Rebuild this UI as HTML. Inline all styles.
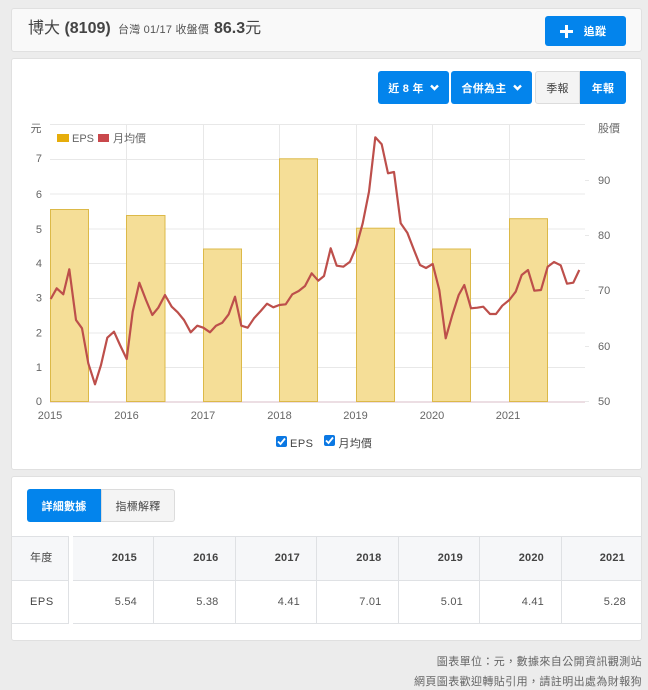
<!DOCTYPE html>
<html lang="zh-Hant">
<head>
<meta charset="utf-8">
<title>博大 (8109)</title>
<style>
html,body{margin:0;padding:0}
body{width:648px;height:688px;overflow:hidden;background:#ececec;position:relative;font-family:"Liberation Sans","Noto Sans CJK TC",sans-serif;color:#444}
.a{position:absolute;white-space:nowrap}
.card{position:absolute;left:11px;width:629px;background:#fff;border:1px solid #e0e0e0;border-radius:3px}
.btn{position:absolute;background:#0384ec;color:#fff;font-size:11px;display:flex;align-items:center;justify-content:center;letter-spacing:.25px;font-weight:bold;box-sizing:border-box}
.gray{background:#f4f4f4;color:#444;border:1px solid #dcdcdc;font-weight:normal}
.chev{width:9px;height:7px;margin-left:6px}
.th,.td{position:absolute;font-size:11px;letter-spacing:.2px;text-align:right;line-height:14px}
.th{font-weight:bold;top:551px;color:#444}
.td{top:595px;color:#555}
.hbg{position:absolute;top:537px;height:43px;background:#f6f7f9}
.l{position:absolute;background:#dfe1e4}
svg text{font-family:"Liberation Sans","Noto Sans CJK TC",sans-serif}
</style>
</head>
<body>
<div class="card" style="top:8px;height:42px;background:#f9f9f9"></div>
<div class="a" style="left:28px;top:19px;font-size:16px;line-height:20px;color:#444">博大 <b>(8109)</b></div>
<div class="a" style="left:118px;top:22px;font-size:11px;line-height:16px;color:#555;letter-spacing:.2px">台灣 01/17 收盤價</div>
<div class="a" style="left:214px;top:19px;font-size:16px;line-height:20px;color:#444"><b>86.3</b>元</div>
<div class="btn" style="left:545px;top:16px;width:81px;height:30px;border-radius:3px;padding-right:5px">
  <svg width="13" height="13" viewBox="0 0 13 13" style="margin-right:11px"><path d="M5 0h3v5h5v3H8v5H5V8H0V5h5z" fill="#fff"/></svg>追蹤
</div>

<div class="card" style="top:58px;height:410px"></div>
<div class="btn" style="left:378px;top:71px;width:71px;height:33px;border-radius:3px">近 8 年<svg class="chev" viewBox="0 0 9 7"><path d="M1 1.500l3.500 3.500L8 1.500" fill="none" stroke="#fff" stroke-width="2.400"/></svg></div>
<div class="btn" style="left:451px;top:71px;width:81px;height:33px;border-radius:3px">合併為主<svg class="chev" viewBox="0 0 9 7"><path d="M1 1.500l3.500 3.500L8 1.500" fill="none" stroke="#fff" stroke-width="2.400"/></svg></div>
<div class="btn gray" style="left:535px;top:71px;width:45px;height:33px;border-radius:3px 0 0 3px">季報</div>
<div class="btn" style="left:580px;top:71px;width:46px;height:33px;border-radius:0 3px 3px 0">年報</div>

<svg class="a" style="left:0;top:0" width="648" height="470" viewBox="0 0 648 470">
  <g stroke="#e8e8e8" stroke-width="1" fill="none">
    <path d="M50 124.500H585M50 159.500H585M50 194H585M50 229H585M50 263.500H585M50 298.500H585M50 333H585M50 367.500H585"/>
    <path d="M126.500 124V402M203.500 124V402M279.500 124V402M356.500 124V402M432.500 124V402M509.500 124V402"/>
    <path d="M585 180.500h4M585 235.500h4M585 290.500h4M585 346.500h4M585 401.500h4"/>
  </g>
  <path d="M50 402H585" stroke="#e5d3da" stroke-width="1.500"/>
  <g fill="#f5de97" stroke="#dcb948" stroke-width="1">
    <rect x="50.500" y="209.500" width="38" height="192"/>
    <rect x="126.500" y="215.500" width="38.500" height="186"/>
    <rect x="203.500" y="249" width="38" height="152.500"/>
    <rect x="279.500" y="158.800" width="38" height="242.700"/>
    <rect x="356.500" y="228.200" width="38" height="173.300"/>
    <rect x="432.500" y="249" width="38" height="152.500"/>
    <rect x="509.500" y="218.700" width="38" height="182.800"/>
  </g>
  <polyline fill="none" stroke="#bd4f4b" stroke-width="2.200" stroke-linejoin="round" points="50.700,299 56.700,288.300 63.300,294.300 69.300,269.300 76,320 82,328.300 88.300,363.300 95,384.300 101,365 107.300,337.700 114,331.700 120,345 126.700,359 132.700,311.700 139.300,282.700 146,300 152.300,315 158.300,307.700 165,295 171.700,306.700 177.700,312.300 184,320 190.700,332.300 197.300,325.700 203.300,327.700 210,332.300 216,325.700 222.300,322.700 228.700,314.300 235,296.700 241.300,325.700 247.700,327.700 254,318.300 260.700,311 267,303.700 273.300,307.300 279.300,305 285.700,304.300 292.300,294.300 298.700,291 305,286 311.700,273.300 318.300,280.700 324,276 330.700,248.300 336.700,265.700 343.300,266.700 350,261.700 356,247.700 362.700,223.300 369,191.700 375.300,137.300 381.700,144.300 388,173.300 394,172 400.700,223.300 407.300,232.700 414,250 420,265 426,268 432.700,264 439.300,290 445.700,338.300 452.300,315 458.700,295 464.300,285 471,308.300 477.300,307.700 483.300,306.700 490,314 496,314 502.300,305.700 509.300,300 515.700,291.700 521.700,275 528,270 534.300,290.700 541,290 547.700,266.700 554,262 560.700,265.300 567,283.700 573.300,282.700 579.300,270"/>
  <g font-size="11" fill="#666">
    <text x="30.500" y="132">元</text>
    <g text-anchor="end">
      <text x="42" y="162">7</text><text x="42" y="198">6</text><text x="42" y="233">5</text><text x="42" y="267">4</text><text x="42" y="301.500">3</text><text x="42" y="336.500">2</text><text x="42" y="371">1</text><text x="42" y="405">0</text>
    </g>
    <text x="598" y="132" font-size="11">股價</text>
    <text x="598" y="184">90</text><text x="598" y="239">80</text><text x="598" y="294">70</text><text x="598" y="350">60</text><text x="598" y="405">50</text>
    <g text-anchor="middle">
      <text x="50" y="419">2015</text><text x="126.500" y="419">2016</text><text x="203" y="419">2017</text><text x="279.500" y="419">2018</text><text x="355.500" y="419">2019</text><text x="432" y="419">2020</text><text x="508" y="419">2021</text>
    </g>
  </g>
  <rect x="57" y="134" width="12" height="8" fill="#e6ad0b"/>
  <text x="72" y="142" font-size="11" fill="#666">EPS</text>
  <rect x="98" y="134" width="11" height="8" fill="#c9484c"/>
  <text x="113" y="142" font-size="11" fill="#666">月均價</text>
  <rect x="276" y="436" width="11" height="11" rx="2" fill="#0b78e3"/>
  <path d="M278 441.500l2.500 2.500 4.500-5.500" fill="none" stroke="#fff" stroke-width="1.800"/>
  <text x="290" y="447" font-size="11" fill="#444" letter-spacing=".5">EPS</text>
  <rect x="324" y="435" width="11" height="11" rx="2" fill="#0b78e3"/>
  <path d="M326 440.500l2.500 2.500 4.500-5.500" fill="none" stroke="#fff" stroke-width="1.800"/>
  <text x="338.500" y="447" font-size="11" fill="#444" letter-spacing=".2">月均價</text>
</svg>

<div class="card" style="top:476px;height:163px"></div>
<div class="btn" style="left:27px;top:489px;width:74px;height:33px;border-radius:3px 0 0 3px">詳細數據</div>
<div class="btn gray" style="left:101px;top:489px;width:74px;height:33px;border-radius:0 3px 3px 0">指標解釋</div>

<div class="hbg" style="left:12px;width:56.500px"></div>
<div class="hbg" style="left:73px;width:568px"></div>
<div class="l" style="left:11px;top:536px;width:58px;height:1px"></div>
<div class="l" style="left:73px;top:536px;width:569px;height:1px"></div>
<div class="l" style="left:11px;top:580px;width:58px;height:1px"></div>
<div class="l" style="left:73px;top:580px;width:569px;height:1px"></div>
<div class="l" style="left:11px;top:623px;width:58px;height:1px"></div>
<div class="l" style="left:73px;top:623px;width:569px;height:1px"></div>
<div class="l" style="left:68px;top:536px;width:1px;height:88px"></div>
<div class="l" style="left:153px;top:536px;width:1px;height:88px"></div>
<div class="l" style="left:235px;top:536px;width:1px;height:88px"></div>
<div class="l" style="left:316px;top:536px;width:1px;height:88px"></div>
<div class="l" style="left:398px;top:536px;width:1px;height:88px"></div>
<div class="l" style="left:479px;top:536px;width:1px;height:88px"></div>
<div class="l" style="left:561px;top:536px;width:1px;height:88px"></div>

<div class="a" style="left:30px;top:551px;font-size:11px;line-height:14px;letter-spacing:.2px">年度</div>
<div class="a" style="left:30px;top:595px;font-size:11px;line-height:14px;letter-spacing:.6px">EPS</div>
<div class="th" style="right:511px">2015</div><div class="th" style="right:429.500px">2016</div><div class="th" style="right:348px">2017</div><div class="th" style="right:266.500px">2018</div><div class="th" style="right:185px">2019</div><div class="th" style="right:104px">2020</div><div class="th" style="right:23px">2021</div>
<div class="td" style="right:511px">5.54</div><div class="td" style="right:429.500px">5.38</div><div class="td" style="right:348px">4.41</div><div class="td" style="right:266.500px">7.01</div><div class="td" style="right:185px">5.01</div><div class="td" style="right:104px">4.41</div><div class="td" style="right:22px">5.28</div>

<div class="a" style="right:6px;top:654px;font-size:11px;line-height:16px;color:#666;letter-spacing:.4px">圖表單位：元，數據來自公開資訊觀測站</div>
<div class="a" style="right:6px;top:674px;font-size:11px;line-height:16px;color:#666;letter-spacing:.4px">網頁圖表歡迎轉貼引用，請註明出處為財報狗</div>
</body>
</html>
